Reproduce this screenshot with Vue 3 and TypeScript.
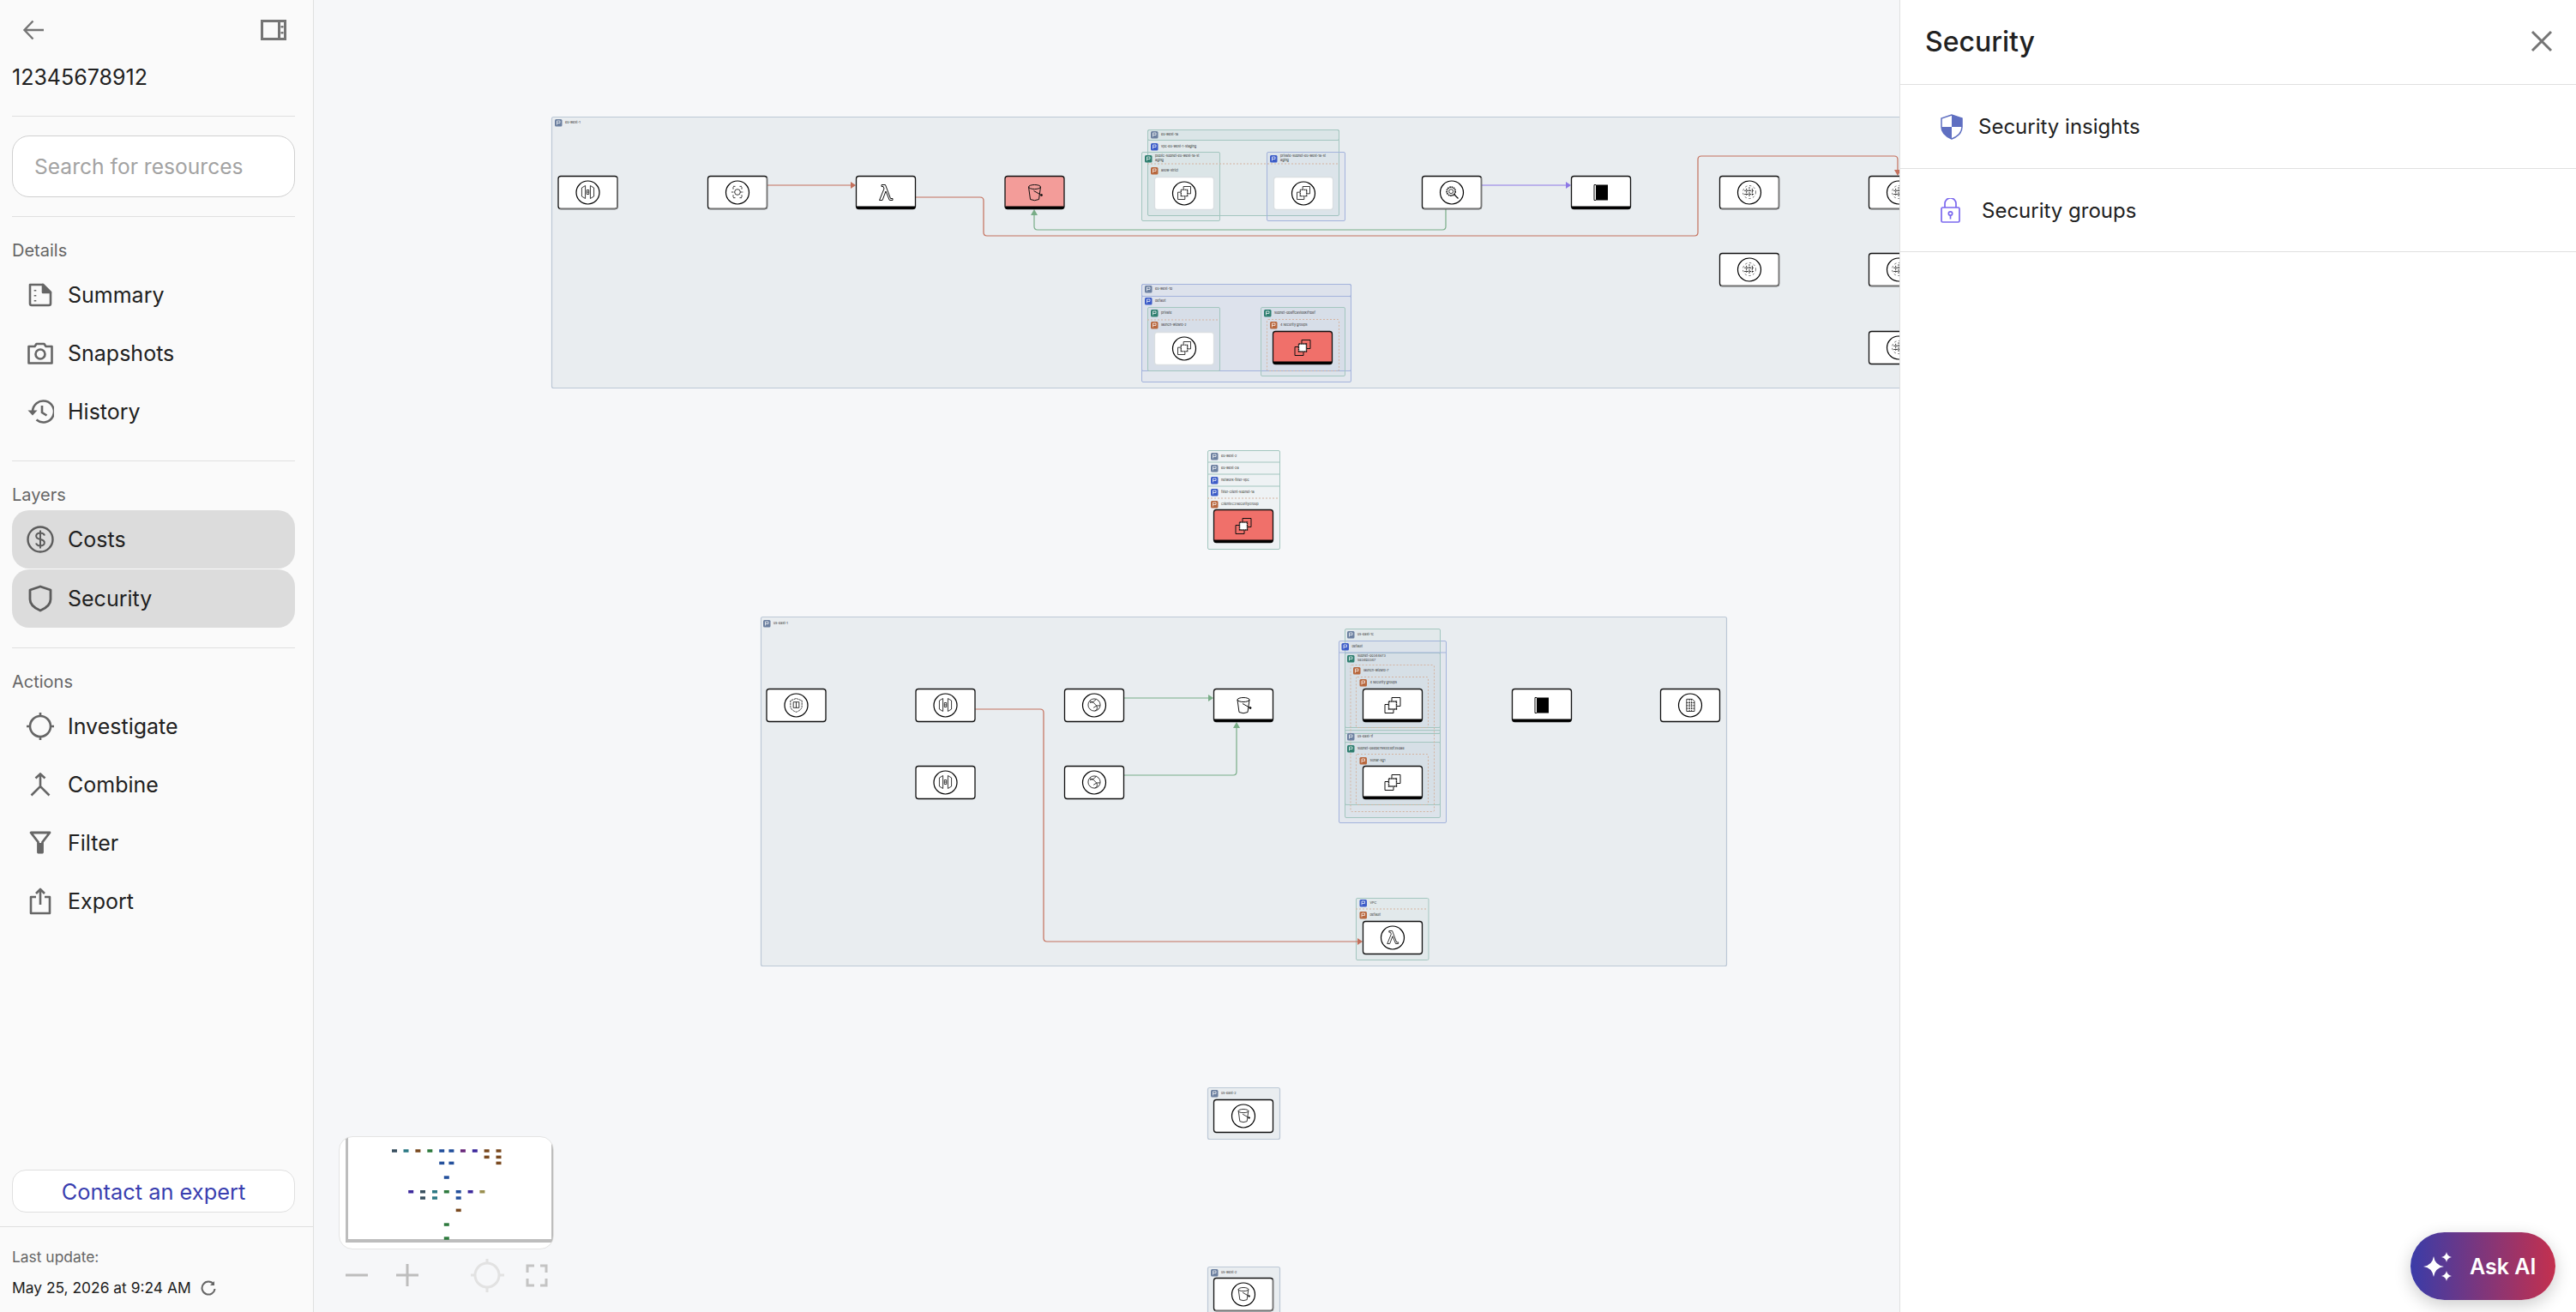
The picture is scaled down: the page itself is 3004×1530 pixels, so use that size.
<script setup lang="ts">
type Box = { x: number; y: number; w: number; h: number; kind: string }
type Label = { x: number; y: number; kind: string; text: string[]; tx?: number }
type GraphNode = { x: number; y: number; icon: string; circle?: boolean; edge?: string; fill?: string; soft?: boolean }
type Edge = { d: string; color: string; arrow?: string }

const detailItems = ['Summary', 'Snapshots', 'History']
const layerItems = ['Costs', 'Security']
const actionItems = ['Investigate', 'Combine', 'Filter', 'Export']

const regions: Box[] = [
  { x: 643, y: 136, w: 1600, h: 316, kind: 'region' },
  { x: 887, y: 719, w: 1126, h: 407, kind: 'region' },
  { x: 1408, y: 1268, w: 84, h: 60, kind: 'region' },
  { x: 1408, y: 1477, w: 84, h: 70, kind: 'region' },
]

const boxes: Box[] = [
  { x: 1338, y: 151, w: 223, h: 100, kind: 'teal' },
  { x: 1338, y: 151, w: 223, h: 12, kind: 'teal' },
  { x: 1331, y: 177, w: 91, h: 80, kind: 'teal' },
  { x: 1477, y: 177, w: 91, h: 80, kind: 'blue' },
  { x: 1331, y: 331, w: 244, h: 114, kind: 'blue' },
  { x: 1331, y: 331, w: 244, h: 14, kind: 'blue' },
  { x: 1331, y: 345, w: 244, h: 87, kind: 'blue' },
  { x: 1338, y: 358, w: 84, h: 74, kind: 'teal' },
  { x: 1470, y: 358, w: 98, h: 80, kind: 'teal' },
  { x: 1477, y: 372, w: 84, h: 60, kind: 'dash' },
  { x: 1408, y: 525, w: 84, h: 115, kind: 'teal' },
  { x: 1561, y: 747, w: 125, h: 212, kind: 'blue' },
  { x: 1568, y: 733, w: 111, h: 122, kind: 'teal' },
  { x: 1568, y: 761, w: 111, h: 87, kind: 'teal' },
  { x: 1568, y: 851, w: 111, h: 102, kind: 'teal' },
  { x: 1568, y: 865, w: 111, h: 73, kind: 'teal' },
  { x: 1574.5, y: 775, w: 97.5, h: 171, kind: 'dash' },
  { x: 1581, y: 789, w: 84, h: 59, kind: 'dash' },
  { x: 1581, y: 879, w: 84, h: 59, kind: 'dash' },
  { x: 1581, y: 1047, w: 84.5, h: 72, kind: 'teal' },
]

const rules = [
  { d: 'M1338 191H1561', kind: 'dash-line' },
  { d: 'M1338 373H1422', kind: 'dash-line' },
  { d: 'M1408 539H1492M1408 553H1492M1408 567H1492', kind: 'teal-line' },
  { d: 'M1408 581H1492', kind: 'dash-line' },
  { d: 'M1581 1060H1665', kind: 'dash-line' },
  { d: 'M1561 761H1686', kind: 'blue-line' },
]

const labels: Label[] = [
  { x: 647, y: 143, kind: 'region', text: ['eu-west-1'], tx: 659 },
  { x: 890, y: 727, kind: 'region', text: ['us-east-1'], tx: 902 },
  { x: 1342, y: 157, kind: 'region', text: ['eu-west-1a'] },
  { x: 1342, y: 171, kind: 'vpc', text: ['vpc-eu-west-1-staging'] },
  { x: 1335, y: 185, kind: 'subnet', text: ['public-subnet-eu-west-1a-st', 'aging'] },
  { x: 1481, y: 185, kind: 'vpc', text: ['private-subnet-eu-west-1a-st', 'aging'] },
  { x: 1342, y: 199, kind: 'sg', text: ['allow-strict'] },
  { x: 1335, y: 337, kind: 'region', text: ['eu-west-1b'] },
  { x: 1335, y: 351, kind: 'vpc', text: ['default'] },
  { x: 1342, y: 365, kind: 'subnet', text: ['private'] },
  { x: 1342, y: 379, kind: 'sg', text: ['launch-wizard-2'] },
  { x: 1474, y: 365, kind: 'subnet', text: ['subnet-0b8ffca5teeklf1b8f'] },
  { x: 1481, y: 379, kind: 'sg', text: ['4 security groups'] },
  { x: 1412, y: 532, kind: 'region', text: ['eu-west-2'] },
  { x: 1412, y: 546, kind: 'region', text: ['eu-west-2a'] },
  { x: 1412, y: 560, kind: 'vpc', text: ['network-filter-vpc'] },
  { x: 1412, y: 574, kind: 'vpc', text: ['filter-client-subnet-1a'] },
  { x: 1412, y: 588, kind: 'sg', text: ['ClientEC2SecurityGroup'] },
  { x: 1571, y: 740, kind: 'region', text: ['us-east-1c'] },
  { x: 1564.5, y: 754, kind: 'vpc', text: ['default'] },
  { x: 1571, y: 768, kind: 'subnet', text: ['subnet-00344673', '5834b3347'] },
  { x: 1578, y: 782, kind: 'sg', text: ['launch-wizard-7'] },
  { x: 1585.5, y: 796, kind: 'sg', text: ['4 security groups'] },
  { x: 1571, y: 859, kind: 'region', text: ['us-east-1f'] },
  { x: 1571, y: 873, kind: 'subnet', text: ['subnet-08ebe7992d3df350a8'] },
  { x: 1585.5, y: 887, kind: 'sg', text: ['Sonar-sg1'] },
  { x: 1585.5, y: 1053, kind: 'vpc', text: ['VPC'] },
  { x: 1585.5, y: 1067, kind: 'sg', text: ['default'] },
  { x: 1412, y: 1275, kind: 'region', text: ['us-east-2'] },
  { x: 1412, y: 1484, kind: 'region', text: ['us-west-2'] },
]

const nodes: GraphNode[] = [
  { x: 650.5, y: 205, icon: 'gate', circle: true, edge: 'gray' },
  { x: 825, y: 205, icon: 'bus', circle: true, edge: 'gray' },
  { x: 998, y: 205, icon: 'lambda', edge: 'black' },
  { x: 1171.5, y: 205, icon: 'bucket', edge: 'black', fill: '#f39c99' },
  { x: 1346, y: 206, icon: 'ec2', circle: true, soft: true },
  { x: 1485, y: 206, icon: 'ec2', circle: true, soft: true },
  { x: 1346, y: 387, icon: 'ec2', circle: true, soft: true },
  { x: 1484, y: 386, icon: 'ec2', edge: 'black', fill: '#f0706a' },
  { x: 1415, y: 594, icon: 'ec2', edge: 'black', fill: '#f0706a' },
  { x: 1658, y: 205, icon: 'inspect', circle: true, edge: 'gray' },
  { x: 1832, y: 205, icon: 'block', edge: 'black' },
  { x: 2005, y: 205, icon: 'mesh', circle: true, edge: 'gray' },
  { x: 2005, y: 295, icon: 'mesh', circle: true, edge: 'gray' },
  { x: 2179, y: 205, icon: 'mesh', circle: true, edge: 'gray' },
  { x: 2179, y: 295, icon: 'mesh', circle: true, edge: 'gray' },
  { x: 2179, y: 386, icon: 'mesh', circle: true },
  { x: 893.5, y: 803, icon: 'shield', circle: true },
  { x: 1067.5, y: 803, icon: 'gate', circle: true },
  { x: 1067.5, y: 893, icon: 'gate', circle: true },
  { x: 1241, y: 803, icon: 'globe', circle: true },
  { x: 1241, y: 893, icon: 'globe', circle: true },
  { x: 1415, y: 803, icon: 'bucket', edge: 'black' },
  { x: 1589, y: 803, icon: 'ec2', edge: 'black' },
  { x: 1589, y: 893, icon: 'ec2', edge: 'black' },
  { x: 1763, y: 803, icon: 'block', edge: 'black' },
  { x: 1936, y: 803, icon: 'stack', circle: true },
  { x: 1589, y: 1074, icon: 'lambda', circle: true },
  { x: 1415, y: 1282, icon: 'bucket', circle: true },
  { x: 1415, y: 1490, icon: 'bucket', circle: true, edge: 'gray' },
]

const red = '#c4705c'
const green = '#79ad87'
const edges: Edge[] = [
  { d: 'M894.5 216H994', color: red, arrow: '998,216 992,212 992,220' },
  { d: 'M1068 230H1143q4 0 4 4V271q0 4 4 4H1976q4 0 4-4V186q0-4 4-4H2209q4 0 4 4V200', color: red, arrow: '2213,205 2209,198 2217,198' },
  { d: 'M1686 244V264q0 4-4 4H1210q-4 0-4-4V248', color: green, arrow: '1206,244 1202,251 1210,251' },
  { d: 'M1727.5 216H1828', color: '#8d78e6', arrow: '1832,216 1826,212 1826,220' },
  { d: 'M1137.5 827H1213q4 0 4 4V1094q0 4 4 4H1585', color: red, arrow: '1589,1098 1583,1094 1583,1102' },
  { d: 'M1311 814H1411', color: green, arrow: '1415,814 1409,810 1409,818' },
  { d: 'M1311 904H1438q4 0 4-4V846', color: green, arrow: '1442,842 1438,849 1446,849' },
]

const slate = '#3a5060'
const teal = '#2d7a85'
const brown = '#7a4a20'
const moss = '#2e7a3e'
const blue = '#24509c'
const indigo = '#3d2a9c'
const dots: [number, number, string][] = [
  [460, 1342, slate], [473.5, 1342, teal], [487.4, 1342, brown], [501.3, 1342, moss], [515.2, 1342, blue],
  [526.4, 1342, blue], [539.9, 1342, '#6a2a7c'], [553.8, 1342, indigo], [567.6, 1342, brown], [581.5, 1342, brown],
  [567.6, 1349.3, brown], [581.5, 1349.3, brown], [515.2, 1356.3, blue], [526.4, 1356.3, blue], [581.5, 1356.3, brown],
  [520.8, 1373, blue], [479.2, 1389.7, indigo], [493, 1389.7, slate], [507, 1389.7, teal], [520.8, 1389.7, moss],
  [534.7, 1389.7, blue], [548.6, 1389.7, indigo], [562.4, 1389.7, '#9a8f50'], [493, 1397, slate], [507, 1397, teal],
  [534.7, 1397, blue], [534.7, 1411.3, brown], [520.8, 1428, moss], [520.8, 1444, moss],
]
</script>

<template>
  <div class="app">
    <aside class="sidebar">
      <div class="top-icons">
        <svg class="back" width="26" height="24" viewBox="0 0 26 24" fill="none" stroke="#757575" stroke-width="2.4">
          <path d="M25 12H3M12.5 1.5 2.5 12l10 10.5" />
        </svg>
        <svg width="30" height="24" viewBox="0 0 30 24" fill="none" stroke="#757575" stroke-width="3">
          <path d="M1.5 1.5h27v21h-27zM21.5 1.5v21" />
          <path d="M25 7v2.5M25 14v2.5" />
        </svg>
      </div>
      <div class="account">12345678912</div>
      <hr />
      <input class="search" type="text" placeholder="Search for resources" />
      <hr />
      <div class="section-label">Details</div>
      <div v-for="item in detailItems" :key="item" class="nav-row">
        <span class="nav-icon">
          <svg v-if="item === 'Summary'" width="30" height="30" viewBox="0 0 30 30" fill="none" stroke="#666" stroke-width="2.6" stroke-linejoin="round">
            <path d="M3 3h15l9 9v13q0 2-2 2H5q-2 0-2-2z" />
            <path d="M18 3v9h9z" fill="#666" />
            <path d="M9 9v1.5M9 15v1.5M9 21v1.5" />
          </svg>
          <svg v-else-if="item === 'Snapshots'" width="30" height="30" viewBox="0 0 30 30" fill="none" stroke="#666" stroke-width="2.6" stroke-linejoin="round">
            <path d="M1.5 7h7l2-3h9l2 3h7v19.5h-27z" />
            <circle cx="15" cy="16" r="5.5" />
          </svg>
          <svg v-else width="32" height="30" viewBox="0 0 32 30" fill="none" stroke="#666" stroke-width="2.6">
            <path d="M7 15a12.5 12.5 0 1 1 4.5 9.6" />
            <path d="M1.5 13.5h11l-5.5 6z" fill="#666" stroke="none" />
            <path d="M18 8v8l5.5 3.5" />
          </svg>
        </span>
        <span>{{ item }}</span>
      </div>
      <hr class="after-rows" />
      <div class="section-label">Layers</div>
      <div v-for="item in layerItems" :key="item" class="nav-row active">
        <span class="nav-icon">
          <svg v-if="item === 'Costs'" width="32" height="32" viewBox="0 0 32 32" fill="none" stroke="#5c5c5c" stroke-width="2.4">
            <circle cx="16" cy="16" r="14.5" />
            <path d="M21 11.5q-1-3-5-3t-4.8 3q-.5 3.5 4.8 4.5t4.8 4.5q-.8 3-4.8 3t-5-3M16 5.5v21" stroke-width="2" />
          </svg>
          <svg v-else width="28" height="32" viewBox="0 0 28 32" fill="none" stroke="#5c5c5c" stroke-width="2.8" stroke-linejoin="round">
            <path d="M14 2 2 6v11q0 8 12 13 12-5 12-13V6z" />
          </svg>
        </span>
        <span>{{ item }}</span>
      </div>
      <hr class="after-rows" />
      <div class="section-label">Actions</div>
      <div v-for="item in actionItems" :key="item" class="nav-row">
        <span class="nav-icon">
          <svg v-if="item === 'Investigate'" width="34" height="34" viewBox="0 0 34 34" fill="none" stroke="#666" stroke-width="2.6">
            <circle cx="17" cy="17" r="12" />
            <path d="M17 1v4M17 29v4M1 17h4M29 17h4" />
          </svg>
          <svg v-else-if="item === 'Combine'" width="24" height="28" viewBox="0 0 24 28" fill="none" stroke="#666" stroke-width="2.6">
            <path d="M6.5 6.5 12 1.5l5.5 5M12 2v14M1.500 26.500 12 16l10.500 10.500" />
          </svg>
          <svg v-else-if="item === 'Filter'" width="26" height="28" viewBox="0 0 26 28" fill="none" stroke="#666" stroke-width="2.8" stroke-linejoin="round">
            <path d="M2 2h22l-8.500 11v12h-5V13z" />
            <path d="M10.500 14h5v12h-5z" fill="#666" stroke="none" />
          </svg>
          <svg v-else width="26" height="32" viewBox="0 0 26 32" fill="none" stroke="#666" stroke-width="2.6" stroke-linejoin="round">
            <path d="M8 11H2v19h22V11h-6M13 20V2M8 7l5-5 5 5" />
          </svg>
        </span>
        <span>{{ item }}</span>
      </div>
      <div class="spacer"></div>
      <button class="contact">Contact an expert</button>
      <div class="foot">
        <div class="foot-label">Last update:</div>
        <div class="foot-date">
          May 25, 2026 at 9:24 AM
          <svg width="18" height="18" viewBox="0 0 18 18" fill="none" stroke="#666" stroke-width="2">
            <path d="M15 4.500A7.500 7.500 0 1 0 16.500 10" />
            <path d="M16 1v5h-5z" fill="#666" stroke="none" />
          </svg>
        </div>
      </div>
    </aside>

    <main class="canvas">
      <svg class="graph" width="1849" height="1530" viewBox="366 0 1849 1530">
        <defs>
          <symbol id="gate" viewBox="0 0 24 24">
            <path d="M3.500 6 8.500 3v18l-5-3zM20.500 6l-5-3v18l5-3z" />
            <path d="M10.500 9h3v6h-3zM10.500 12h3" />
          </symbol>
          <symbol id="bus" viewBox="0 0 24 24">
            <circle cx="12" cy="12" r="4" />
            <path d="M6 8V4h4M18 8V4h-4M6 16v4h4M18 16v4h-4M3.500 12H8M16 12h4.500" stroke-dasharray="3 1" />
          </symbol>
          <symbol id="lambda" viewBox="0 0 24 24">
            <path d="M7 3h4.500L17.500 19H20v2h-3.700L12 10.500 8 21H4.500L10 7.500 9 5H7z" />
          </symbol>
          <symbol id="bucket" viewBox="0 0 24 24">
            <ellipse cx="12" cy="5.500" rx="7" ry="2.500" />
            <path d="M5 5.500 7 20q5 2.500 10 0l2-14.500" />
            <path d="M11 10l8 4.500" />
            <circle cx="20" cy="15" r="1" fill="#111" />
          </symbol>
          <symbol id="ec2" viewBox="0 0 24 24">
            <path d="M11 7V3h10v10h-4M3 11h4M3 11v10h10v-4" />
            <rect x="7.500" y="7.500" width="9" height="9" fill="#fff" stroke-width="1.400" stroke-dasharray="1.500 .4" />
          </symbol>
          <symbol id="block" viewBox="0 0 24 24">
            <path d="M6 3H4v18h2" />
            <rect x="6" y="3" width="14" height="18" fill="#000" stroke="none" />
          </symbol>
          <symbol id="inspect" viewBox="0 0 24 24">
            <circle cx="11" cy="11" r="6" stroke-dasharray="2 .8" stroke-width="2" />
            <circle cx="11" cy="11" r="3" />
            <path d="M15 15l6 6" stroke-width="1.500" />
          </symbol>
          <symbol id="mesh" viewBox="0 0 24 24">
            <circle cx="12" cy="12" r="9" stroke-dasharray="3 3" stroke-width=".7" />
            <path d="M12 5v14M5 10h14M5 15h14M8 7v10M16 7v10" stroke-dasharray="2.500 1" />
          </symbol>
          <symbol id="shield" viewBox="0 0 24 24">
            <path d="M12 3l8 3v8q0 5-8 8-8-3-8-8V6z" stroke-dasharray="3 .8" />
            <path d="M8 8h8v8H8zM12 8v8" />
          </symbol>
          <symbol id="globe" viewBox="0 0 24 24">
            <circle cx="12" cy="12" r="8.500" />
            <path d="M6 7q6 1 9 6t-2 7.500M15 4q-3 4-9 5M20 13q-5-1-9 3" />
          </symbol>
          <symbol id="stack" viewBox="0 0 24 24">
            <path d="M7 4h8l3 3v14H7z" />
            <path d="M7 9h11M7 13h11M7 17h11M11 4v17M14 4v17" stroke-dasharray="2 1" />
          </symbol>
        </defs>

        <rect v-for="(r, i) in regions" :key="'r' + i" class="region" :x="r.x + .5" :y="r.y + .5" :width="r.w" :height="r.h" rx="2" />
        <rect v-for="(b, i) in boxes" :key="'b' + i" :class="b.kind" :x="b.x + .5" :y="b.y + .5" :width="b.w" :height="b.h" rx="1.500" />
        <path v-for="(l, i) in rules" :key="'l' + i" :class="l.kind" :d="l.d" />

        <g v-for="(e, i) in edges" :key="'e' + i">
          <path :d="e.d" fill="none" :stroke="e.color" stroke-width="1.200" />
          <polygon v-if="e.arrow" :points="e.arrow" :fill="e.color" />
        </g>

        <g v-for="(n, i) in nodes" :key="'n' + i">
          <rect class="node" :class="{ soft: n.soft }" :x="n.x + .5" :y="n.y + .5" width="69" height="38" rx="3" :fill="n.fill || '#fff'" />
          <path v-if="n.edge === 'black'" :d="`M${n.x + 1} ${n.y + 35.500}h68v1.500q0 1.500-1.500 1.500h-65q-1.500 0-1.500-1.500z`" fill="#000" />
          <path v-if="n.edge === 'gray'" :d="`M${n.x + 69.500} ${n.y + 2}v34q0 2.500-2.500 2.500h-65`" fill="none" stroke="#777" stroke-width="1.500" />
          <circle v-if="n.circle" class="ring" :cx="n.x + 35" :cy="n.y + 19.500" r="13.500" />
          <use
            class="glyph"
            :href="'#' + n.icon"
            :x="n.x + 35 - (n.circle ? 10 : 12)"
            :y="n.y + 18.500 - (n.circle ? 9.500 : 11)"
            :width="n.circle ? 20 : 24"
            :height="n.circle ? 20 : 24"
          />
        </g>

        <g v-for="(l, i) in labels" :key="'t' + i">
          <rect :class="'chip-' + l.kind" :x="l.x" :y="l.y - 4" width="8.500" height="8.500" rx="1.500" />
          <path class="chip-mark" :d="`M${l.x + 2.500} ${l.y + 2.500}v-4.500h3.500v2.500h-3.500`" />
          <text v-for="(t, j) in l.text" :key="j" class="tag" :x="l.tx ?? l.x + 12" :y="l.y + 1.300 + (l.text.length > 1 ? j * 5 - 3 : 0)">{{ t }}</text>
        </g>
      </svg>

      <div class="minimap">
        <svg width="249" height="130" viewBox="396 1326 249 130">
          <rect x="403" y="1326" width="3" height="123" fill="#bdbdbd" />
          <rect x="643" y="1326" width="2" height="123" fill="#bdbdbd" />
          <rect x="403" y="1445" width="242" height="4" fill="#bdbdbd" />
          <rect v-for="(d, i) in dots" :key="i" :x="d[0] - 3" :y="d[1] - 1.700" width="6" height="3.500" :fill="d[2]" />
        </svg>
      </div>
      <div class="zoom-controls">
        <svg width="243" height="40" viewBox="403 1468 243 40" fill="none">
          <path d="M403 1487h26M462 1487h26M475 1474v26" stroke="#bdbdbd" stroke-width="3" />
          <circle cx="568" cy="1487" r="14" stroke="#e2e2e2" stroke-width="3" />
          <path d="M568 1468v6M568 1500v7M549 1487h5M582 1487h6" stroke="#e2e2e2" stroke-width="3" />
          <path d="M615 1484v-8h8M630 1476h7v8M615 1491v8h8M630 1499h7v-8" stroke="#c4c4c4" stroke-width="3" />
        </svg>
      </div>
    </main>

    <section class="panel">
      <header class="panel-head">
        <span class="panel-title">Security</span>
        <svg width="26" height="26" viewBox="0 0 26 26" fill="none" stroke="#757575" stroke-width="3">
          <path d="M2 2l22 22M24 2 2 24" />
        </svg>
      </header>
      <div class="panel-row">
        <svg class="insights" width="26" height="30" viewBox="0 0 26 30">
          <path d="M13 1 1 5v10q0 9 12 14 12-5 12-14V5z" fill="none" stroke="#5f6fc1" stroke-width="1.500" />
          <path d="M13 1l12 4v10H13zM13 15v14Q1 24 1 15z" fill="#5f6fc1" />
        </svg>
        <span>Security insights</span>
      </div>
      <div class="panel-row last">
        <svg class="lock" width="23" height="29" viewBox="0 0 23 29" fill="none" stroke="#7b68ee" stroke-width="1.700">
          <rect x="1" y="11" width="21" height="17" rx="1.500" />
          <path d="M5 11V6.500a6.500 6.500 0 0 1 13 0V11" />
          <circle cx="11.500" cy="18" r="2.200" />
          <path d="M11.500 20v4.500" />
        </svg>
        <span>Security groups</span>
      </div>
    </section>

    <button class="ask-ai">
      <svg width="36" height="36" viewBox="0 0 36 36" fill="#fff">
        <path d="M14 6Q15.500 16.500 26 18 15.500 19.500 14 30 12.500 19.500 2 18 12.500 16.500 14 6Z" />
        <path d="M29 1Q29.800 6.200 35 7 29.800 7.800 29 13 28.200 7.800 23 7 28.200 6.200 29 1Z" />
        <path d="M29 23Q29.800 28.200 35 29 29.800 29.800 29 35 28.200 29.800 23 29 28.200 28.200 29 23Z" />
      </svg>
      Ask AI
    </button>
  </div>
</template>

<style scoped>
  .app {
    display: flex;
    position: relative;
    width: 100vw;
    height: 100vh;
    overflow: hidden;
    font-family: Inter, "Noto Sans", sans-serif;
    color: #212121;
  }

  .sidebar {
    flex: 0 0 366px;
    box-sizing: border-box;
    display: flex;
    flex-direction: column;
    padding: 0 21px 0 14px;
    background: #fafafa;
    border-right: 1px solid #e0e0e0;
    font-size: 25px;
  }

  .top-icons {
    display: flex;
    align-items: center;
    justify-content: space-between;
    padding: 23px 10px 0 12px;
  }

  .account {
    margin-top: 28px;
    height: 30px;
    line-height: 30px;
  }

  hr {
    width: 100%;
    margin: 0;
    border: 0;
    border-top: 1px solid #e0e0e0;
  }

  .account + hr {
    margin-top: 30px;
  }

  .search {
    box-sizing: border-box;
    width: 100%;
    height: 72px;
    margin: 22px 0;
    padding: 0 25px;
    border: 1px solid #d0d0d0;
    border-radius: 20px;
    background: #fff;
    font: inherit;
    font-size: 24.6px;
    outline: none;
  }

  .search::placeholder {
    color: #a3a3a3;
  }

  .after-rows {
    margin-top: 23px;
  }

  .section-label {
    margin-top: 27px;
    height: 24px;
    line-height: 24px;
    font-size: 20px;
    color: #666;
  }

  .section-label + .nav-row {
    margin-top: 6px;
  }

  .nav-row {
    display: flex;
    align-items: center;
    height: 68px;
    border-radius: 20px;
    padding-left: 14px;
    gap: 13px;
  }

  .nav-row.active {
    background: #dcdcdc;
  }

  .nav-row.active + .nav-row.active {
    margin-top: 1px;
  }

  .nav-icon {
    flex: 0 0 38px;
    display: flex;
    justify-content: center;
  }

  .spacer {
    flex: 1;
  }

  .contact {
    height: 50px;
    border: 1px solid #e0e0e0;
    border-radius: 16px;
    background: #fff;
    color: #3a3fb0;
    font: inherit;
    font-size: 25.4px;
  }

  .foot {
    margin: 16px -21px 0 -14px;
    padding: 24px 14px 0;
    height: 100px;
    box-sizing: border-box;
    border-top: 1px solid #e0e0e0;
  }

  .foot-label {
    font-size: 17.4px;
    line-height: 22px;
    color: #666;
  }

  .foot-date {
    display: flex;
    align-items: center;
    gap: 11px;
    margin-top: 14px;
    font-size: 17.4px;
    line-height: 22px;
  }

  .canvas {
    flex: 1;
    position: relative;
    overflow: hidden;
    background: #f6f7f9;
  }

  .graph {
    display: block;
  }

  .region {
    fill: #e9edf0;
    stroke: #bcc8d6;
    stroke-width: 1.200;
  }

  .teal {
    fill: rgba(120, 170, 165, .06);
    stroke: #a3c6bf;
  }

  .blue {
    fill: rgba(110, 140, 210, .05);
    stroke: #a3b3dc;
  }

  .dash {
    fill: none;
    stroke: #d4b3a0;
    stroke-dasharray: 2 2;
  }

  .dash-line {
    fill: none;
    stroke: #d4b3a0;
    stroke-dasharray: 2 2;
  }

  .teal-line {
    fill: none;
    stroke: #a3c6bf;
  }

  .blue-line {
    fill: none;
    stroke: #a3b3dc;
  }

  .node {
    stroke: #111;
    stroke-width: 1.300;
  }

  .node.soft {
    stroke: #dadfe2;
  }

  .ring {
    fill: none;
    stroke: #000;
    stroke-width: 1.200;
  }

  .glyph {
    fill: none;
    stroke: #111;
    stroke-width: 1;
  }

  .chip-region {
    fill: #6c80a0;
  }

  .chip-vpc {
    fill: #3c5cc8;
  }

  .chip-subnet {
    fill: #2f7f70;
  }

  .chip-sg {
    fill: #b8683e;
  }

  .chip-mark {
    fill: none;
    stroke: #fff;
    stroke-width: .7;
  }

  .tag {
    font-size: 3.800px;
    fill: #333;
  }

  .minimap {
    position: absolute;
    left: 29px;
    bottom: 73px;
    width: 249px;
    height: 130px;
    border: 1px solid #e4e4e4;
    border-radius: 16px;
    background: #fff;
    overflow: hidden;
  }

  .minimap svg,
  .zoom-controls svg {
    display: block;
  }

  .zoom-controls {
    position: absolute;
    left: 37px;
    bottom: 22px;
  }

  .panel {
    flex: 0 0 789px;
    box-sizing: border-box;
    background: #fff;
    border-left: 1px solid #e0e0e0;
    font-size: 24px;
    position: relative;
  }

  .panel-head {
    display: flex;
    align-items: center;
    justify-content: space-between;
    height: 96px;
    padding: 0 27px 2px 29px;
    border-bottom: 1px solid #e0e0e0;
  }

  .panel-title {
    font-size: 32px;
    font-weight: 500;
  }

  .panel-row {
    display: flex;
    align-items: center;
    height: 97px;
    padding-left: 47px;
    border-bottom: 1px solid #e0e0e0;
  }

  .panel-row.last {
    height: 96px;
  }

  .insights {
    margin-right: 18px;
  }

  .lock {
    margin-right: 25px;
  }

  .ask-ai {
    position: absolute;
    right: 24px;
    bottom: 14px;
    width: 169px;
    height: 79px;
    display: flex;
    align-items: center;
    gap: 20px;
    padding: 0 0 0 13px;
    border: 0;
    border-radius: 40px;
    background: linear-gradient(90deg, #3a3ca8, #c4304e);
    box-shadow: 0 6px 20px rgba(0, 0, 0, .2);
    color: #fff;
    font: 600 25px Inter, sans-serif;
  }
</style>
